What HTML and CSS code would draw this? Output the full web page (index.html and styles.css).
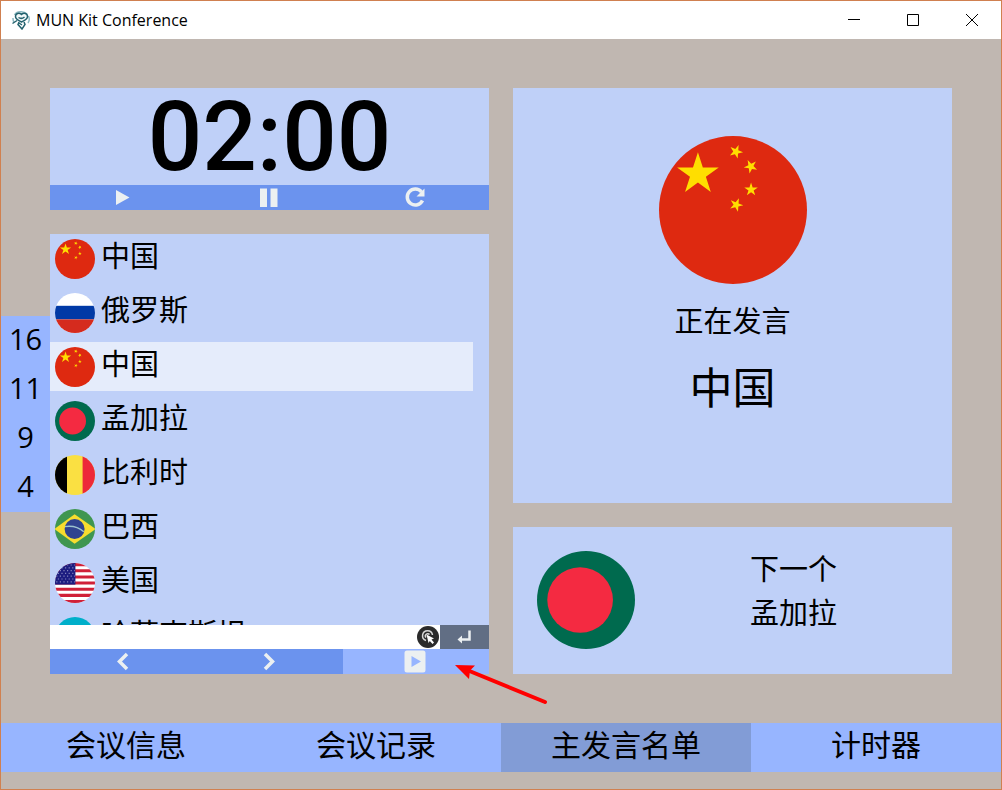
FILE: index.html
```html
<!DOCTYPE html>
<html lang="zh-CN">
<head>
  <meta charset="UTF-8">
  <meta name="viewport" content="width=device-width, initial-scale=1.0">
  <title>MUN Kit Conference</title>
  <link rel="stylesheet" href="styles.css">
</head>
<body>
  <!-- Shared flags -->
  <svg class="symbols" aria-hidden="true">
    <symbol id="flag-cn" viewBox="0 0 100 100">
      <rect width="100" height="100" fill="#de2910"/>
      <g fill="#ffde00">
        <path transform="translate(26.3 25.8) scale(14.8)" d="M0-1 .225-.309H.951L.363.118.588.809 0 .382-.588.809-.363.118-.951-.309H-.225Z"/>
        <path transform="translate(52 10.6) rotate(22) scale(4.8)" d="M0-1 .225-.309H.951L.363.118.588.809 0 .382-.588.809-.363.118-.951-.309H-.225Z"/>
        <path transform="translate(62 20.6) rotate(46) scale(4.8)" d="M0-1 .225-.309H.951L.363.118.588.809 0 .382-.588.809-.363.118-.951-.309H-.225Z"/>
        <path transform="translate(62.2 36.2) scale(4.8)" d="M0-1 .225-.309H.951L.363.118.588.809 0 .382-.588.809-.363.118-.951-.309H-.225Z"/>
        <path transform="translate(52.2 46.5) rotate(22) scale(4.8)" d="M0-1 .225-.309H.951L.363.118.588.809 0 .382-.588.809-.363.118-.951-.309H-.225Z"/>
      </g>
    </symbol>
    <symbol id="flag-ru" viewBox="0 0 100 100">
      <rect width="100" height="100" fill="#fff"/>
      <rect y="32" width="100" height="34" fill="#0039a6"/>
      <rect y="66" width="100" height="34" fill="#d52b1e"/>
    </symbol>
    <symbol id="flag-bd" viewBox="0 0 100 100">
      <rect width="100" height="100" fill="#006a4e"/>
      <circle cx="44" cy="50" r="33.5" fill="#f42a41"/>
    </symbol>
    <symbol id="flag-be" viewBox="0 0 100 100">
      <rect width="100" height="100" fill="#fae042"/>
      <rect width="30" height="100" fill="#000"/>
      <rect x="69" width="31" height="100" fill="#ed2939"/>
    </symbol>
    <symbol id="flag-br" viewBox="0 0 100 100">
      <rect width="100" height="100" fill="#3f9650"/>
      <path d="M-2 50 49 13 102 50 49 87Z" fill="#f7dd2e"/>
      <circle cx="49" cy="50" r="25" fill="#2f438f"/>
      <path d="M25 44Q53 40 72 57" fill="none" stroke="#9cc4cf" stroke-width="3.5"/>
    </symbol>
    <symbol id="flag-us" viewBox="0 0 100 100">
      <rect width="100" height="100" fill="#fff"/>
      <path d="M0 4H100M0 19.4H100M0 34.8H100M0 50.2H100M0 65.6H100M0 81H100M0 96.4H100" stroke="#d02038" stroke-width="7.7"/>
      <rect width="51" height="54" fill="#1c1c80"/>
      <g fill="none" stroke="#8484bc" stroke-width="3" stroke-dasharray="3 6">
        <path d="M3 5H50M7 12H50M3 19H50M7 26H50M3 33H50M7 40H50M3 47H50"/>
      </g>
    </symbol>
    <symbol id="flag-kz" viewBox="0 0 100 100">
      <rect width="100" height="100" fill="#00afca"/>
      <circle cx="50" cy="42" r="19" fill="#fec50c"/>
      <path d="M22 56Q50 82 78 56Q65 84 50 84Q35 84 22 56Z" fill="#fec50c"/>
    </symbol>
  </svg>

  <div class="window">
    <header class="title-bar">
      <svg class="app-logo" viewBox="0 0 20 20" aria-hidden="true">
        <path d="M3.5 5A7 5 0 0 1 16 4M17.5 6A7 7 0 0 1 17 13M2 8A7 7 0 0 0 3 12" fill="none" stroke="#8db9c2" stroke-width="1.5"/>
        <path d="M10.500 4.500C8.500 2.500 4.500 3 4.500 6.500C4.500 9.500 8 10.500 10.500 12C13 10.500 16.500 9.500 16.500 6.500C16.500 3 12.500 2.500 10.500 4.500Z" fill="#f2f8f9" stroke="#24626e" stroke-width="1.5"/>
        <path d="M7.500 7.500Q10.500 9.500 13.500 7M1.500 13.500 6 10.500M8 12 7 14.500 11 19 14 14.500 13 12M8 13 11 15" fill="none" stroke="#24626e" stroke-width="1.5"/>
      </svg>
      <h1 class="title">MUN Kit Conference</h1>
      <div class="window-buttons">
        <button type="button" aria-label="最小化"><svg viewBox="0 0 12 12"><path d="M0 5.5H12"/></svg></button>
        <button type="button" aria-label="最大化"><svg viewBox="0 0 12 12"><path d="M.5.5H11.5V11.5H.5Z"/></svg></button>
        <button type="button" aria-label="关闭"><svg viewBox="0 0 12 12"><path d="M0 0 12 12M12 0 0 12"/></svg></button>
      </div>
    </header>

    <main class="content">
      <aside class="side-numbers">
        <button type="button">16</button>
        <button type="button">11</button>
        <button type="button">9</button>
        <button type="button">4</button>
      </aside>

      <div class="column">
        <section class="timer">
          <div class="time">02:00</div>
          <div class="controls">
            <button type="button" aria-label="开始"><svg viewBox="0 0 24 24"><path d="M5 4 18.500 11.500 5 19Z"/></svg></button>
            <button type="button" aria-label="暂停"><svg viewBox="0 0 24 24"><path d="M3 2.500H10V21H3ZM13.500 2.500H20.500V21H13.500Z"/></svg></button>
            <button type="button" aria-label="重置"><svg viewBox="0 0 24 24"><path d="M17.500 6A8 8 0 1 0 18.500 14.500" fill="none" stroke="#ecf0f1" stroke-width="3.500"/><path d="M20.500 2.500V10.500H12.500Z"/></svg></button>
          </div>
        </section>

        <section class="speakers">
          <ul class="speaker-list">
            <li><svg class="flag"><use href="#flag-cn"/></svg><span>中国</span></li>
            <li><svg class="flag"><use href="#flag-ru"/></svg><span>俄罗斯</span></li>
            <li class="current"><svg class="flag"><use href="#flag-cn"/></svg><span>中国</span></li>
            <li><svg class="flag"><use href="#flag-bd"/></svg><span>孟加拉</span></li>
            <li><svg class="flag"><use href="#flag-be"/></svg><span>比利时</span></li>
            <li><svg class="flag"><use href="#flag-br"/></svg><span>巴西</span></li>
            <li><svg class="flag"><use href="#flag-us"/></svg><span>美国</span></li>
            <li><svg class="flag"><use href="#flag-kz"/></svg><span>哈萨克斯坦</span></li>
          </ul>
          <form class="add-speaker">
            <input type="text" aria-label="添加国家">
            <button type="button" class="pick-button" aria-label="选择">
              <svg viewBox="0 0 22 22">
                <circle cx="11" cy="11" r="11" fill="#2b2b2b"/>
                <path d="M9 14.5A5 5 0 1 1 15.5 9M9 11.5A2.3 2.3 0 1 1 12.5 8.5" fill="none" stroke="#d8d8d8" stroke-width="1.5"/>
                <path d="M9.500 8.500 17 12.500 14.500 13.500 17 16.500 15.500 18 12.800 15 11.500 17Z" fill="#fff"/>
              </svg>
            </button>
            <button type="submit" class="enter-button" aria-label="添加">
              <svg viewBox="0 0 24 24"><path d="M16.5 5.5V14.500H8" fill="none" stroke="#ecf0f1" stroke-width="2.5"/><path d="M4.500 14.500 9 10.500V18.500Z"/></svg>
            </button>
          </form>
          <div class="controls">
            <button type="button" aria-label="上一个"><svg viewBox="0 0 24 24"><path d="M16 4 8.500 11.500 16 19" fill="none" stroke="#ecf0f1" stroke-width="3.5"/></svg></button>
            <button type="button" aria-label="下一个"><svg viewBox="0 0 24 24"><path d="M8 4 15.500 11.500 8 19" fill="none" stroke="#ecf0f1" stroke-width="3.5"/></svg></button>
            <button type="button" class="light" aria-label="播放"><svg viewBox="0 0 24 24"><path fill-rule="evenodd" d="M3 .5H19Q21.500 .5 21.500 3V20Q21.500 22.500 19 22.500H3Q.5 22.500 .5 20V3Q.5 .5 3 .5ZM7.500 6V17L17 11.500Z"/></svg></button>
          </div>
          <svg class="arrow" viewBox="0 0 96 46" aria-hidden="true">
            <path d="M14 9 92 41" fill="none" stroke="#f00" stroke-width="4" stroke-linecap="round"/>
            <path d="M2 4 22 4.500 17 9.500 16 18Z" fill="#f00"/>
          </svg>
        </section>
      </div>

      <div class="column">
        <section class="speaking">
          <svg class="flag"><use href="#flag-cn"/></svg>
          <p>正在发言</p>
          <p class="country">中国</p>
        </section>
        <section class="next">
          <svg class="flag"><use href="#flag-bd"/></svg>
          <div class="next-text">
            <p>下一个</p>
            <p>孟加拉</p>
          </div>
        </section>
      </div>
    </main>

    <nav class="tabs">
      <button type="button">会议信息</button>
      <button type="button">会议记录</button>
      <button type="button" class="active">主发言名单</button>
      <button type="button">计时器</button>
    </nav>
  </div>
</body>
</html>
```
FILE: styles.css
```css
* {
  box-sizing: border-box;
}
body {
  margin: 0;
  font-family: "Open Sans", "Noto Sans CJK SC", sans-serif;
  font-size: 29px;
  color: #000;
}
button {
  border: none;
  padding: 0;
  background: none;
  font: inherit;
  color: inherit;
  cursor: pointer;
}
p {
  margin: 0;
}
.symbols {
  position: absolute;
  width: 0;
  height: 0;
}
.window {
  display: flex;
  flex-direction: column;
  height: 100vh;
  padding-bottom: 17px;
  border: 1px solid #d08050;
  background-color: #c0b7b1;
}

/* Title bar */
.title-bar {
  display: flex;
  align-items: center;
  height: 38px;
  padding-left: 10px;
  background-color: #fff;
}
.app-logo {
  width: 20px;
  height: 20px;
}
.title {
  flex: 1;
  margin: 0 0 0 5px;
  font-size: 16px;
  font-weight: normal;
}
.window-buttons {
  display: flex;
  height: 100%;
}
.window-buttons button {
  display: flex;
  align-items: center;
  justify-content: center;
  width: 59px;
}
.window-buttons svg {
  width: 12px;
  height: 12px;
  fill: none;
  stroke: #000;
}

/* Main area */
.content {
  display: flex;
  flex: 1;
  min-height: 0;
  padding: 49px 49px 49px 0;
}
.side-numbers {
  display: flex;
  flex-direction: column;
  justify-content: center;
  width: 49px;
  padding-top: 66px;
}
.side-numbers button {
  height: 49px;
  padding-bottom: 4px;
  line-height: 45px;
  background-color: #97b5ff;
}
.column {
  display: flex;
  flex: 1;
  flex-direction: column;
  gap: 24px;
  min-width: 0;
}
.column + .column {
  margin-left: 24px;
}
.flag {
  flex-shrink: 0;
  border-radius: 50%;
}
.timer, .speakers, .speaking, .next {
  background-color: #bfd0f8;
}
.time {
  height: 97px;
  font-family: Roboto, sans-serif;
  font-size: 96px;
  font-weight: 500;
  line-height: 99px;
  text-align: center;
}
.controls {
  display: grid;
  grid-template-columns: 1fr 1fr 1fr;
  height: 25px;
  background-color: #6b93ee;
}
.controls button, .enter-button {
  display: flex;
  align-items: center;
  justify-content: center;
}
.controls svg, .enter-button svg {
  width: 24px;
  height: 24px;
  fill: #ecf0f1;
}
.controls .light {
  background-color: #97b5ff;
}

/* Speaker list */
.speakers {
  position: relative;
  display: flex;
  flex: 1;
  flex-direction: column;
  min-height: 0;
}
.speaker-list {
  display: flex;
  flex: 1;
  flex-direction: column;
  gap: 5px;
  min-height: 0;
  margin: 0;
  padding: 0 16px 0 0;
  list-style: none;
  overflow: hidden;
}
.speaker-list li {
  display: flex;
  flex-shrink: 0;
  gap: 6px;
  align-items: center;
  height: 49px;
  padding-left: 5px;
  line-height: 44px;
}
.speaker-list span {
  height: 49px;
}
.speaker-list .current {
  background-color: #e5ecfb;
}
.speaker-list .flag {
  width: 40px;
  height: 40px;
}
.add-speaker {
  display: flex;
  height: 24px;
  background-color: #fff;
}
.add-speaker input {
  flex: 1;
  min-width: 0;
  border: none;
  outline: none;
  font-size: 16px;
}
.pick-button {
  width: 22px;
  margin-right: 1px;
}
.pick-button svg {
  display: block;
  width: 22px;
  height: 22px;
}
.enter-button {
  width: 49px;
  background-color: #616e84;
}
.arrow {
  position: absolute;
  right: -60px;
  bottom: -33px;
  width: 96px;
  height: 46px;
}

/* Current and next speaker */
.speaking {
  display: flex;
  flex: 1;
  flex-direction: column;
  align-items: center;
  padding-top: 48px;
}
.speaking .flag {
  width: 148px;
  height: 148px;
  margin-bottom: 14px;
}
.speaking .country {
  margin-top: 16px;
  font-size: 43px;
  line-height: 64px;
}
.next {
  display: flex;
  height: 147px;
  padding: 24px 0 24px 24px;
}
.next .flag {
  width: 98px;
  height: 98px;
}
.next-text {
  flex: 1;
  margin-top: -4px;
  line-height: 44px;
  text-align: center;
}

/* Bottom tabs */
.tabs {
  display: grid;
  grid-template-columns: repeat(4, 1fr);
  height: 49px;
  background-color: #97b5ff;
}
.tabs button {
  padding-bottom: 5px;
  font-size: 30px;
  line-height: 44px;
}
.tabs .active {
  background-color: #829cd6;
}
```
